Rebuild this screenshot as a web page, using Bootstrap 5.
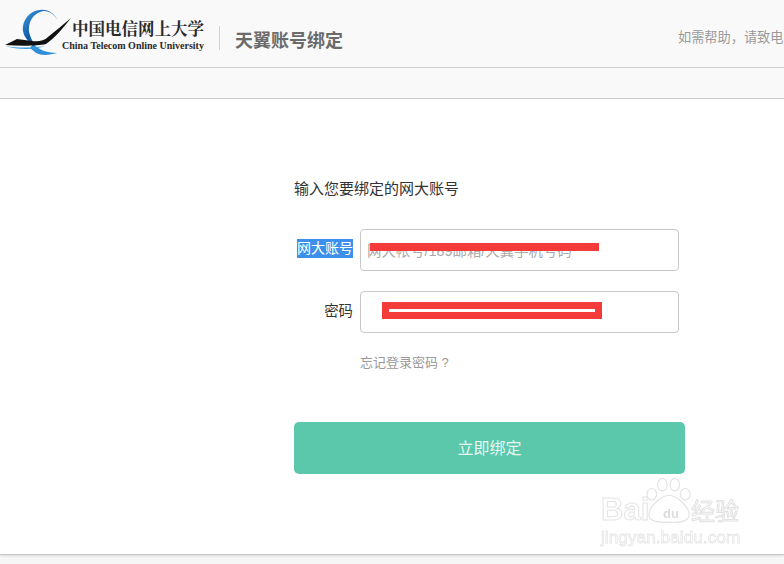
<!DOCTYPE html>
<html lang="zh">
<head>
<meta charset="utf-8">
<title>天翼账号绑定</title>
<link href="https://cdn.jsdelivr.net/npm/bootstrap@5.3.0/dist/css/bootstrap.min.css" rel="stylesheet">
<style>
html,body{height:100%;overflow:hidden}
body{background:#f6f6f6;font-family:"Liberation Sans","Noto Sans CJK SC",sans-serif;color:#333;font-size:14px}
.topbar{height:68px;background:#f9f9f9;border-bottom:1px solid #cfcfcf;white-space:nowrap;overflow:hidden}
.logo-box{width:205px;height:52px;margin-left:4px;margin-top:9px}
.logo-cn{font-family:"Noto Serif CJK SC","Noto Sans CJK SC",serif;font-size:16.5px;font-weight:700;color:#2a2a2a;line-height:20px;margin-left:68px;margin-top:9px;white-space:nowrap}
.logo-en{font-family:"Liberation Serif",serif;font-size:10px;font-weight:700;color:#2a2a2a;line-height:12px;margin-left:58px;margin-top:2px;white-space:nowrap}
.logo-mark{left:0;top:0}
.divider{width:1px;height:24px;background:#d5d5d5;margin-left:10px;margin-top:26px}
.page-name{font-size:18px;font-weight:700;color:#6b6b6b;margin-left:15px;margin-top:28px;line-height:26px}
.help{font-size:13.2px;color:#999;position:absolute;left:678px;top:28px;line-height:20px}
.strip{height:31px;background:#f9f9f9;border-bottom:1px solid #cfcfcf}
.main-area{height:456px;background:#fff;border-bottom:1px solid #c9c9c9;box-shadow:0 1px 2px rgba(0,0,0,.12);padding:80px 0 0 294px}
.form-wrap{width:391px}
.form-title{font-size:15px;line-height:20px;color:#333;margin-bottom:30px}
.field-row{height:42px;margin-bottom:20px}
.field-label{width:59px;margin-right:7px;margin-bottom:2px;text-align:right;font-size:14.4px;line-height:19px;color:#333;white-space:nowrap}
.field-label-picked{margin-bottom:-2px}
.picked{background:#3c90ec;color:#fff;display:inline-block;line-height:19px;width:56px;text-align:left;font-size:14px;white-space:nowrap;overflow:hidden}
.text-input{width:319px;height:42px;border:1px solid #c8c8c8;border-radius:4px;padding:0 6px;font-size:14.4px;color:#333;background:#fff}
.text-input-low{padding-top:2px}
.text-input:focus{box-shadow:none;border-color:#c8c8c8}
.text-input::placeholder{color:#aaa}
.bar-one{left:10px;top:14px;width:229px;height:8px;background:#f53a3a}
.bar-two{left:22px;top:11px;width:220px;height:17px;background:#f53a3a}
.bar-two::after{content:"";position:absolute;left:7px;top:7px;width:206px;height:3px;background:#fff}
.forgot{margin-left:66px;font-size:13px;line-height:20px;color:#999;text-decoration:none;display:block}
.bind-btn{display:block;width:391px;height:52px;margin-top:49px;padding-top:8px;background:#5bc8ac;border:0;border-radius:5px;color:#e6f6f1;font-size:16px}
.bind-btn:hover,.bind-btn:active{background:#5bc8ac;color:#e6f6f1}
.mark-wrap{left:600px;top:478px;width:145px;height:70px;pointer-events:none}
.wm-paw{left:46px;top:0}
.wm-latin{left:1px;top:14px;font-family:"Liberation Sans",sans-serif;font-weight:700;font-size:31px;line-height:36px;color:#fff;-webkit-text-stroke:1px #e4e4e4}
.wm-du{left:63px;top:29px;font-size:13px;line-height:14px;color:#ddd;font-weight:700}
.wm-cn{left:91px;top:21px;font-size:24px;line-height:26px;color:#fff;-webkit-text-stroke:1px #e2e2e2;white-space:nowrap}
.wm-url{left:1px;top:49px;font-size:17.3px;line-height:20px;color:#fff;-webkit-text-stroke:.8px #e6e6e6;white-space:nowrap}
</style>
</head>
<body>
<header class="topbar d-flex position-relative">
  <div class="logo-box position-relative">
    <svg class="logo-mark position-absolute" width="72" height="50" viewBox="4 9 72 50" aria-hidden="true">
      <defs>
        <linearGradient id="ring" x1="0" y1="0" x2="1" y2="1">
          <stop offset="0" stop-color="#3f9be0"/><stop offset=".45" stop-color="#0e5aa8"/><stop offset="1" stop-color="#4aa8e8"/>
        </linearGradient>
      </defs>
      <path d="M40 10C28 11 22 22 23 31C24 38 30 43 36 47C32 40 28 34 29 27C30 18 36 12 44 11C50 11 55 15 58 21C55 14 48 9 40 10Z" fill="url(#ring)"/>
      <path d="M33 44C38 49 46 53 57 53C50 55 42 56 36 53L30 48Z" fill="#2f8fd8"/>
      <path d="M5 46C18 48 32 48 45 46C35 50 18 50 5 46Z" fill="#3d9de0"/>
      <path d="M71 18C63 28 55 38 46 44C38 46 20 46 5 45L17 39L32 41C38 42 44 41 48 37C55 31 63 25 71 18Z" fill="#111"/>
    </svg>
    <div class="logo-cn">中国电信网上大学</div>
    <div class="logo-en">China Telecom Online University</div>
  </div>
  <div class="divider"></div>
  <div class="page-name">天翼账号绑定</div>
  <div class="help">如需帮助，请致电</div>
</header>
<div class="strip"></div>
<main class="main-area position-relative">
  <form class="form-wrap" onsubmit="return false">
    <div class="form-title">输入您要绑定的网大账号</div>
    <div class="field-row d-flex align-items-center">
      <label class="field-label field-label-picked" for="acct"><span class="picked">网大账号</span></label>
      <div class="position-relative">
        <input id="acct" class="form-control text-input text-input-low" type="text" placeholder="网大帐号/189邮箱/天翼手机号码">
        <span class="bar-one position-absolute"></span>
      </div>
    </div>
    <div class="field-row d-flex align-items-center">
      <label class="field-label" for="pwd">密码</label>
      <div class="position-relative">
        <input id="pwd" class="form-control text-input" type="text">
        <span class="bar-two position-absolute"></span>
      </div>
    </div>
    <a class="forgot" href="#">忘记登录密码 ?</a>
    <button class="btn bind-btn" type="submit">立即绑定</button>
  </form>
</main>
<div class="mark-wrap position-fixed">
  <svg class="wm-paw position-absolute" width="46" height="46" viewBox="0 0 48 48" fill="#fff" stroke="#e3e3e3" stroke-width="1.2" aria-hidden="true">
    <ellipse cx="6" cy="17" rx="5" ry="6"/><ellipse cx="17" cy="7" rx="5" ry="6.5"/><ellipse cx="30" cy="7" rx="5" ry="6.5"/><ellipse cx="41" cy="17" rx="5" ry="6"/>
    <path d="M24 18C16 18 3 30 3 38C3 45 12 47 24 46C36 47 45 45 45 38C45 30 32 18 24 18Z"/>
  </svg>
  <span class="wm-latin position-absolute">Bai</span>
  <span class="wm-du position-absolute">du</span>
  <span class="wm-cn position-absolute">经验</span>
  <span class="wm-url position-absolute">jingyan.baidu.com</span>
</div>
<script src="https://cdn.jsdelivr.net/npm/bootstrap@5.3.0/dist/js/bootstrap.bundle.min.js"></script>
</body>
</html>
